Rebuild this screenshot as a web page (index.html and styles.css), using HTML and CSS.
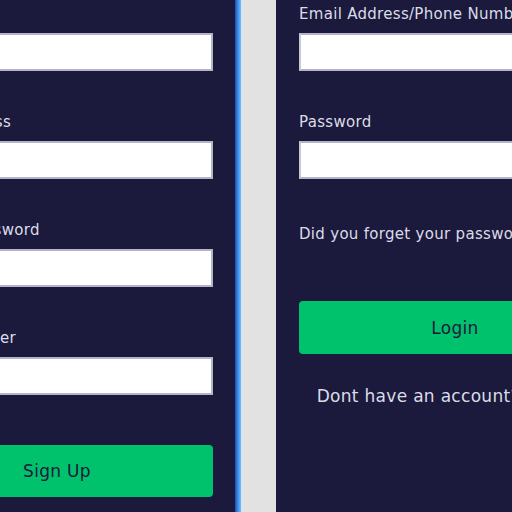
FILE: index.html
```html
<!DOCTYPE html>
<html>
<head>
<meta charset="utf-8">
<link rel="stylesheet" href="styles.css">
</head>
<body>
<div class="stage">
  <section class="panel panel-signup">
    <form class="form">
      <div class="field"><label class="label">Full Name</label><input class="input" type="text"></div>
      <div class="field"><label class="label">Email Address</label><input class="input" type="text"></div>
      <div class="field"><label class="label">Confirm Password</label><input class="input" type="password"></div>
      <div class="field"><label class="label">Phone Number</label><input class="input" type="text"></div>
      <button class="btn btn-signup" type="button">Sign Up</button>
    </form>
  </section>
  <div class="divider"></div>
  <section class="panel panel-login">
    <form class="form">
      <div class="field"><label class="label">Email Address/Phone Number</label><input class="input" type="text"></div>
      <div class="field"><label class="label">Password</label><input class="input" type="password"></div>
      <p class="forgot">Did you forget your password?</p>
      <button class="btn btn-login" type="button">Login</button>
      <p class="switch">Dont have an account? Sign Up</p>
    </form>
  </section>
</div>
</body>
</html>
```
FILE: styles.css
```css
* { box-sizing: border-box; }
html, body { margin: 0; padding: 0; }
body {
  background: #e2e2e2;
  font-family: "DejaVu Sans", Inter, sans-serif;
  overflow: hidden;
  height: 512px;
}
.stage {
  display: flex;
  margin-left: -122px;
  height: 512px;
}
.panel {
  background: #1b193c;
  height: 512px;
  flex: none;
  padding-top: 3px;
}
.panel-signup {
  width: 357px;
  padding-left: 23px;
  padding-right: 22px;
}
.divider {
  width: 6px;
  flex: none;
  background: linear-gradient(to right, #1d4fa8, #3d8ef0, #6cc0ff);
  margin-right: 35px;
}
.panel-login {
  width: 360px;
  padding-left: 23px;
}
.form {
  width: 312px;
  display: flex;
  flex-direction: column;
}
.field {
  display: flex;
  flex-direction: column;
  margin-bottom: 40px;
}
.label {
  font-size: 15px;
  letter-spacing: 0.3px;
  line-height: 22px;
  color: #dcdce8;
  margin-bottom: 8px;
  white-space: nowrap;
}
.input {
  height: 38px;
  border: 2px solid #b4b4c8;
  border-left-color: #c8c8d6;
  background: #fff;
  font: inherit;
}
.btn {
  height: 52px;
  border: none;
  border-radius: 4px;
  background: #01c26c;
  color: #1b193c;
  font-family: inherit;
  font-size: 17px;
  letter-spacing: 0.3px;
}
.btn-signup { margin-top: 10px; }
.forgot {
  margin: 4px 0 0;
  font-size: 15px;
  letter-spacing: 0.3px;
  line-height: 22px;
  color: #dcdce8;
  white-space: nowrap;
}
.btn-login { margin-top: 56px; height: 53px; }
.switch {
  margin: 31px 0 0;
  text-align: center;
  font-size: 17px;
  letter-spacing: 0.3px;
  line-height: 22px;
  color: #dcdce8;
  white-space: nowrap;
}
```
